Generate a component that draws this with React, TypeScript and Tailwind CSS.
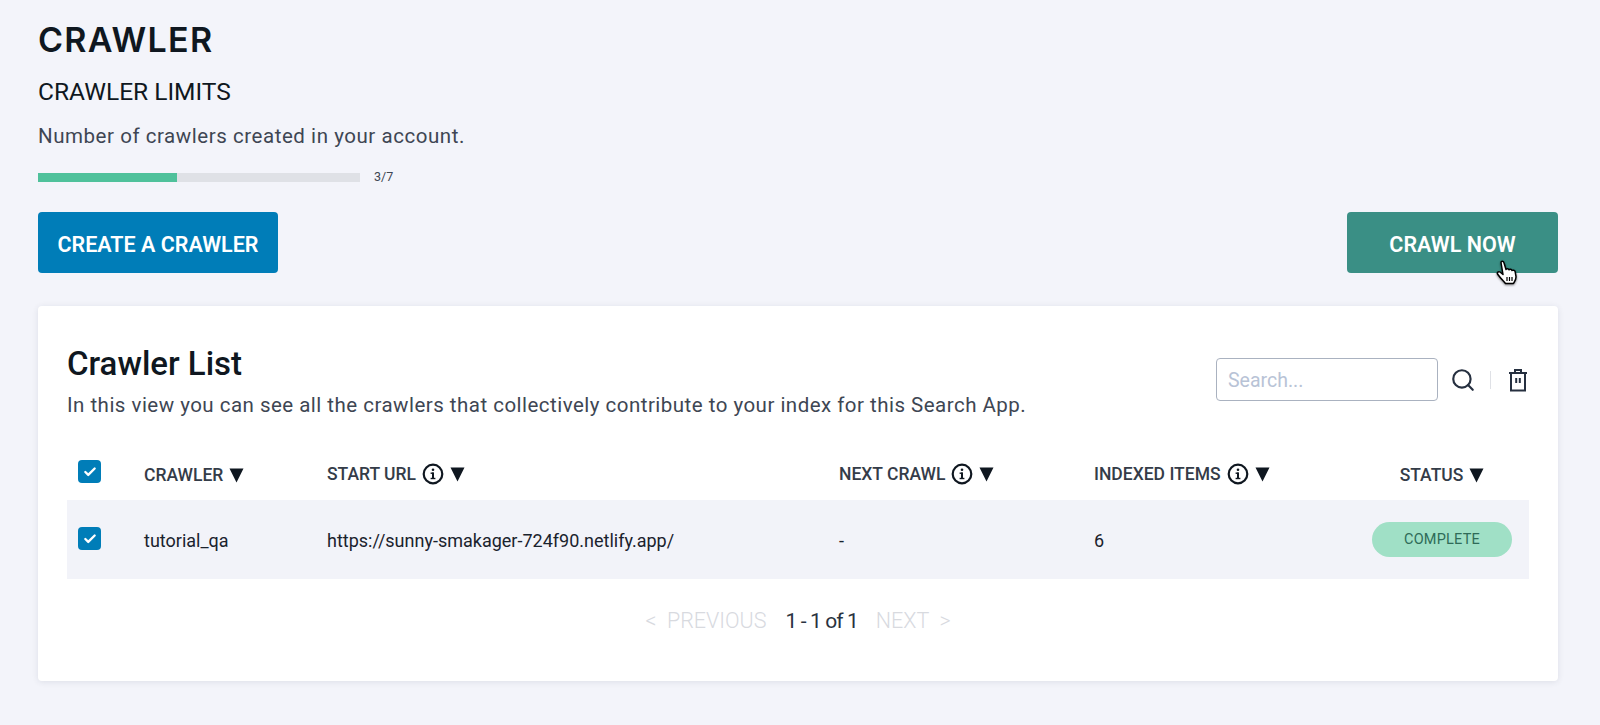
import { Check, Search } from "lucide-react";

const font = "font-['Roboto',sans-serif]";

function CheckBox() {
  return (
    <div className="w-[23px] h-[23px] rounded-[4px] bg-[#007db8] flex items-center justify-center">
      <Check size={14} strokeWidth={4} className="text-white" />
    </div>
  );
}

function Info() {
  return (
    <svg width="22" height="22" viewBox="0 0 22 22" className="shrink-0">
      <circle cx="11" cy="11" r="9.300" fill="none" stroke="#0f1720" strokeWidth="2.200" />
      <rect x="10" y="9.500" width="2" height="6.500" fill="#0f1720" />
      <rect x="8.600" y="9.500" width="3" height="1.400" fill="#0f1720" />
      <rect x="8.600" y="14.800" width="4.800" height="1.400" fill="#0f1720" />
      <circle cx="11" cy="6.800" r="1.300" fill="#0f1720" />
    </svg>
  );
}

function Arrow() {
  return (
    <svg width="15" height="15" viewBox="0 0 15 15" className="shrink-0">
      <path d="M0.500 0.500H14.500L7.500 14.500Z" fill="#0f1720" />
    </svg>
  );
}

function Head({ label, info }: { label: string; info?: boolean }) {
  return (
    <div className="flex items-center gap-[6px] text-[17.500px] font-medium text-[#343c48]">
      <span>{label}</span>
      {info && <Info />}
      <Arrow />
    </div>
  );
}

function Trash() {
  return (
    <svg width="20" height="24" viewBox="0 0 20 24" fill="none" stroke="#263040" strokeWidth="2">
      <path d="M1 5H19" />
      <path d="M7 5V2H13V5" />
      <path d="M3 5V22.500H17V5" />
      <path d="M8.200 10V15M11.800 10V15" />
    </svg>
  );
}

// mouse cursor sitting on the crawl button
function HandCursor() {
  return (
    <svg
      width="22"
      height="25"
      viewBox="0 0 22 25"
      className="absolute left-[149px] top-[48px] drop-shadow-[0_1px_1px_rgba(0,0,0,0.45)]"
    >
      <path
        d="M5 2.500C5 0.800 7.500 0.800 7.900 2.500L10 9.500C10.500 8.300 12.500 8.300 13 9.800C13.500 8.800 15.500 9 16 10.500C16.800 9.800 18.800 10.200 19.200 11.800L20 16.500C20.300 19.500 18.500 21.500 17.500 23.500H9.500C8 21.500 5 19 1.500 14C0.800 12.500 2.500 11 4 12L7 14.500Z"
        fill="#fff"
        stroke="#000"
        strokeWidth="1.500"
        strokeLinejoin="round"
      />
      <path d="M11 17V21M13.500 17V21M16 17V21" stroke="#000" strokeWidth="1.200" />
    </svg>
  );
}

export default function App() {
  return (
    <div className={`${font} w-[1600px] h-[725px] overflow-hidden bg-[#f3f4fa] pl-[38px] pr-[42px] pt-[20px]`}>
      <h1 className="font-['Inter',sans-serif] text-[34px] leading-[40px] font-semibold tracking-[1.300px] text-[#0f1720]">CRAWLER</h1>
      <h2 className="mt-[16px] text-[24.500px] leading-[32px] text-[#0f1720]">CRAWLER LIMITS</h2>
      <p className="mt-[14px] text-[20.500px] leading-[28px] tracking-[0.550px] text-[#3e4653]">Number of crawlers created in your account.</p>

      <div className="mt-[19px] flex items-center gap-[14px]">
        <div className="w-[322px] h-[9px] bg-[#dfe1e6]">
          <div className="w-[139px] h-full bg-[#4fc19b]" />
        </div>
        <span className="text-[12.500px] leading-[16px] text-[#3e4653]">3/7</span>
      </div>

      <div className="mt-[27px] flex justify-between">
        <button className="w-[240px] h-[61px] pt-[5px] rounded-[4px] bg-[#007db8] text-white text-[21.500px] font-semibold">
          CREATE A CRAWLER
        </button>
        <button className="relative w-[211px] h-[61px] pt-[5px] rounded-[4px] bg-[#3a8f85] text-white text-[21.500px] font-semibold">
          CRAWL NOW
          <HandCursor />
        </button>
      </div>

      <section className="mt-[33px] h-[375px] bg-white rounded-[4px] shadow-[0_1px_6px_rgba(30,40,70,0.1)] px-[29px] pt-[39px]">
        <div className="flex justify-between">
          <div>
            <h3 className="text-[33px] leading-[38px] font-medium text-[#0f1720]">Crawler List</h3>
            <p className="mt-[8px] text-[20.500px] leading-[28px] tracking-[0.480px] text-[#3e4653]">
              In this view you can see all the crawlers that collectively contribute to your index for this Search App.
            </p>
          </div>
          <div className="flex items-start mr-[1px]">
            <div className="mt-[13px] w-[222px] h-[43px] pt-[2px] rounded-[4px] border border-[#aab2c0] px-[11px] flex items-center text-[19.500px] text-[#b8c3d6]">
              Search...
            </div>
            <Search size={26} strokeWidth={2} className="mt-[22px] ml-[12px] text-[#263040]" />
            <div className="mt-[26px] ml-[14px] w-px h-[18px] bg-[#dfe1e6]" />
            <div className="mt-[23px] ml-[17px]">
              <Trash />
            </div>
          </div>
        </div>

        <div className="mt-[35px] grid grid-cols-[77px_183px_512px_255px_256px_1fr] items-center h-[46px]">
          <div className="pl-[11px] pb-[11px]"><CheckBox /></div>
          <div className="pb-[3px]"><Head label="CRAWLER" /></div>
          <div className="pb-[6px]"><Head label="START URL" info /></div>
          <div className="pb-[6px]"><Head label="NEXT CRAWL" info /></div>
          <div className="pb-[6px]"><Head label="INDEXED ITEMS" info /></div>
          <div className="flex justify-center pl-[5px] pb-[3px]"><Head label="STATUS" /></div>
        </div>
        <div className="grid grid-cols-[77px_183px_512px_255px_256px_1fr] items-center h-[79px] bg-[#f2f3f9] text-[18px] text-[#1a222d]">
          <div className="pl-[11px] pb-[2px]"><CheckBox /></div>
          <div className="pt-[1px]">tutorial_qa</div>
          <div className="pt-[1px]">https://sunny-smakager-724f90.netlify.app/</div>
          <div className="pt-[1px]">-</div>
          <div className="pt-[1px]">6</div>
          <div className="flex justify-end pr-[17px]">
            <span className="w-[140px] h-[35px] mb-[1px] pt-[1px] rounded-full bg-[#a0e0c6] flex items-center justify-center text-[14.500px] tracking-[0.2px] text-[#2f6b58]">
              COMPLETE
            </span>
          </div>
        </div>

        <div className="mt-[28px] flex items-center justify-center text-[21.500px] leading-[28px] font-light">
          <span className="text-[#d8dadf]">&lt;&nbsp; PREVIOUS</span>
          <span className="ml-[19px] text-[#2a3340] font-normal text-[21px] tracking-[-0.9px]">1 - 1 of 1</span>
          <span className="ml-[18px] text-[#d8dadf]">NEXT &nbsp;&gt;</span>
        </div>
      </section>
    </div>
  );
}
